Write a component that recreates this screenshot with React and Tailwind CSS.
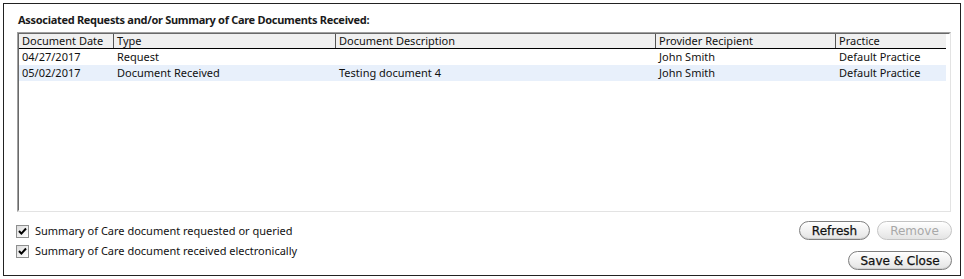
import React from "react";

const columns = [
  { label: "Document Date", w: "w-[95px]" },
  { label: "Type", w: "w-[222px]" },
  { label: "Document Description", w: "w-[320px]" },
  { label: "Provider Recipient", w: "w-[180px]" },
  { label: "Practice", w: "flex-1" },
];

const rows = [
  ["04/27/2017", "Request", "", "John Smith", "Default Practice"],
  ["05/02/2017", "Document Received", "Testing document 4", "John Smith", "Default Practice"],
];

function CheckRow({ label }) {
  return (
    <label className="flex items-center gap-[6px] h-[20px]">
      <span className="w-[13px] h-[13px] border border-[#8e8f8f] bg-gradient-to-br from-[#dcdcdc] to-white flex items-center justify-center">
        <svg width="9" height="9" viewBox="0 0 9 9">
          <path d="M1 4 L3.4 6.6 L8 1.5" fill="none" stroke="#000" strokeWidth="2" />
        </svg>
      </span>
      <span>{label}</span>
    </label>
  );
}

function PillButton({ children, disabled, className = "" }) {
  return (
    <button
      type="button"
      className={
        "h-[19px] rounded-full border bg-gradient-to-b from-white to-[#e4e4e4] text-[12px] leading-none font-['DejaVu_Sans',sans-serif] " +
        (disabled
          ? "border-[#c4c4c4] text-[#a8a8a8]"
          : "border-[#7e7e7e] text-[#111] shadow-[inset_0_-1px_0_#d0d0d0] [-webkit-text-stroke:0.25px_#111]") +
        " " +
        className
      }
    >
      {children}
    </button>
  );
}

export default function App() {
  return (
    <div className="w-[964px] h-[279px] bg-white p-[3px] font-['Noto_Sans',sans-serif] text-[11px] text-[#111]">
      <div className="h-[273px] w-[958px] border border-[#222] flex flex-col pl-[14px] pr-[9px]">
        <div className="font-bold pt-[9px] h-[28px] leading-[14px] text-[#1a1a1a] tracking-[-0.3px]">
          Associated Requests and/or Summary of Care Documents Received:
        </div>

        <div className="h-[180px] w-[934px] -ml-[1px] border border-t-[#a0a0a0] border-l-[#a0a0a0] border-r-[#e3e3e3] border-b-[#e3e3e3]">
          <div className="h-full border border-t-[#696969] border-l-[#696969] border-r-white border-b-white pr-[3px]">
            <div className="flex h-[15px] bg-[#f0f0f0] border-b border-black leading-[14px]">
              {columns.map((c, i) => (
                <div
                  key={c.label}
                  className={c.w + " pl-[3px] " + (i < columns.length - 1 ? "border-r border-[#555]" : "")}
                >
                  {c.label}
                </div>
              ))}
            </div>
            {rows.map((r, ri) => (
              <div
                key={ri}
                className={"flex h-[16px] leading-[16px] " + (ri === 1 ? "bg-[#e8f0fb]" : "")}
              >
                {r.map((cell, ci) => (
                  <div key={ci} className={columns[ci].w + " pl-[3px]"}>
                    {cell}
                  </div>
                ))}
              </div>
            ))}
          </div>
        </div>

        <div className="flex justify-between mt-[8px]">
          <div className="flex flex-col -ml-[2px] mt-[1px]">
            <CheckRow label="Summary of Care document requested or queried" />
            <CheckRow label="Summary of Care document received electronically" />
          </div>
          <div className="flex flex-col items-end gap-[11px] mr-[-1px] mt-[1px]">
            <div className="flex gap-[7px]">
              <PillButton className="w-[71px]">Refresh</PillButton>
              <PillButton disabled className="w-[75px]">Remove</PillButton>
            </div>
            <PillButton className="w-[104px]">Save &amp; Close</PillButton>
          </div>
        </div>
      </div>
    </div>
  );
}
